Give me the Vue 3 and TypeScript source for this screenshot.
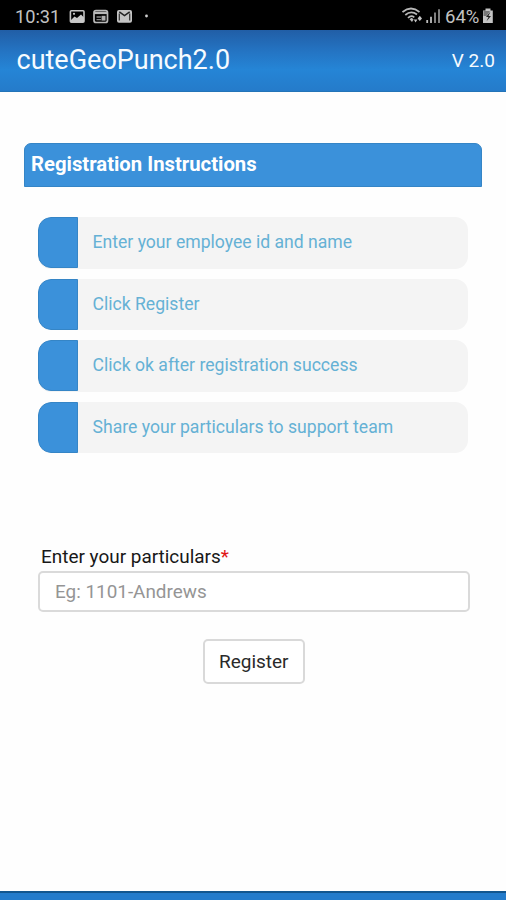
<script setup lang="ts">
import { ref } from 'vue'

const steps: string[] = [
  'Enter your employee id and name',
  'Click Register',
  'Click ok after registration success',
  'Share your particulars to support team',
]
const particulars = ref('')
</script>

<template>
  <div class="screen">
    <div class="status">
      <span class="clock">10:31</span>
      <svg class="notices" width="82" height="30" viewBox="0 0 82 30">
        <rect x="1.4" y="10.7" width="13.6" height="11.6" rx="1" fill="none" stroke="#c4c4c4" stroke-width="1.6" />
        <path d="M2 20 L5.5 16.5 L8 18 L12 14.5 L15 17.5 V22 H2Z" fill="#c8c8c8" />
        <circle cx="5" cy="13.8" r="1.1" fill="#c8c8c8" />
        <rect x="25" y="10.7" width="13.5" height="11.8" rx="2" fill="none" stroke="#b8b8b8" stroke-width="1.7" />
        <path d="M25 13 H38.5" stroke="#b8b8b8" stroke-width="2.2" />
        <path d="M27.5 17 H32 M27.5 19.7 H32" stroke="#888" stroke-width="1.3" />
        <rect x="32.5" y="15.8" width="4" height="4.8" fill="#b0b0b0" />
        <rect x="48" y="9.9" width="15" height="12.8" rx="2" fill="#c4c4c4" />
        <path d="M50.3 20.5 V13.5 M60.7 20.5 V13.5" stroke="#303030" stroke-width="1.2" />
        <path d="M50.3 11.8 L55.5 15.6 L60.7 11.8" fill="none" stroke="#222" stroke-width="1.5" />
        <circle cx="77.5" cy="16" r="1.4" fill="#d0d0d0" />
      </svg>
      <svg class="signal" width="41" height="30" viewBox="0 0 41 30">
        <g fill="none" stroke="#b8b8b8" stroke-width="1.7">
          <path d="M0.5 12 Q9 5 17.5 12" />
          <path d="M3.3 15 Q9 9.8 15 14.5" />
          <path d="M6 18 Q9 14.6 12.3 17.3" />
        </g>
        <path d="M7.5 19.3 L9.7 17.8 L11.6 19.5 L10 22Z" fill="#b8b8b8" />
        <path d="M11.8 19.6 L13.6 22.6 L15.4 19.6Z M15.6 18.6 L17.8 15.8 L20 18.6 L17.8 21Z" fill="#c4c4c4" />
        <path d="M25.2 20 V23 M29 16.8 V23" stroke="#bcbcbc" stroke-width="1.8" />
        <path d="M33 12.5 V23 M37 9.3 V23" stroke="#8d8d8d" stroke-width="1.8" />
      </svg>
      <span class="percent">64%</span>
      <svg class="battery" width="12" height="30" viewBox="0 0 12 30">
        <path d="M3.5 8.5 H8.5 V10.5 H10.8 V23 H1 V10.5 H3.5Z" fill="#c4c4c4" />
        <path d="M1.5 11 H8 L4.5 16 H1.5Z" fill="#777" />
        <path d="M8.5 11.5 L4 17 H6.5 L4.5 21.2 L9 16 H6.5Z" fill="#202020" />
      </svg>
    </div>

    <header class="bar">
      <h1>cuteGeoPunch2.0</h1>
      <span class="version">V 2.0</span>
    </header>

    <main>
      <h2>Registration Instructions</h2>
      <ul>
        <li v-for="step in steps" :key="step">
          <i></i>
          <span>{{ step }}</span>
        </li>
      </ul>
      <form @submit.prevent>
        <label for="particulars">Enter your particulars<b>*</b></label>
        <input id="particulars" v-model="particulars" type="text" placeholder="Eg: 1101-Andrews" />
        <button type="submit">Register</button>
      </form>
    </main>
    <footer></footer>
  </div>
</template>

<style>
body {
  margin: 0;
  background: #fefefe;
}
</style>

<style scoped>
* {
  box-sizing: border-box;
}
.screen {
  display: flex;
  flex-direction: column;
  height: 900px;
  overflow: hidden;
  background: #fefefe;
  font-family: Roboto, sans-serif;
}
.status {
  display: flex;
  flex: none;
  height: 30px;
  padding: 0 12px 0 15px;
  background: #000;
  color: #c2c2c2;
}
.clock {
  width: 54px;
  font-size: 18.2px;
  line-height: 34px;
}
.signal {
  margin-left: auto;
}
.percent {
  width: 39px;
  padding-left: 2px;
  font-size: 18.5px;
  line-height: 34px;
}
.bar {
  display: flex;
  flex: none;
  justify-content: space-between;
  height: 62px;
  padding: 0 11px 0 16.5px;
  border-bottom: 1px solid #2374b8;
  background: linear-gradient(#215ea6, #2474c3 35%, #2585d6 65%, #257bca);
  color: #f6fbff;
}
h1 {
  margin: 0;
  font-size: 27px;
  font-weight: 400;
  line-height: 61px;
}
.version {
  font-size: 19px;
  line-height: 61px;
}
main {
  flex: 1;
  padding: 51px 24px 0;
}
h2 {
  height: 44px;
  margin: 0;
  padding-left: 6px;
  border: 1px solid #3585c6;
  border-radius: 7px 7px 0 0;
  background: #3b91da;
  color: #fff;
  font-size: 20.3px;
  font-weight: 700;
  line-height: 40px;
}
ul {
  display: grid;
  gap: 10px;
  margin: 30px 14px 0;
  padding: 0;
  list-style: none;
}
li {
  display: flex;
  height: 51.5px;
  overflow: hidden;
  border-radius: 13px;
  background: #f4f4f4;
  color: #65b1d5;
  font-size: 17.6px;
  line-height: 50.5px;
}
li i {
  width: 40px;
  height: 51px;
  margin-right: 14.5px;
  border: 1px solid #3585c6;
  border-radius: 13px 0 0 13px;
  background: #3b91da;
}
form {
  display: flex;
  flex-direction: column;
  margin: 91px 12.5px 0 14px;
}
label {
  height: 27px;
  padding-left: 3px;
  color: #181818;
  font-size: 18.95px;
  line-height: 26px;
}
label b {
  color: #e01616;
  font-weight: 400;
}
input {
  height: 41px;
  padding: 0 15px;
  border: 2px solid #dadada;
  border-radius: 5px;
  background: #fff;
  color: #222;
  font: 18.9px Roboto, sans-serif;
}
input::placeholder {
  color: #959595;
}
button {
  align-self: center;
  width: 102px;
  height: 45px;
  margin-top: 27px;
  padding: 0;
  border: 2px solid #d9d9d9;
  border-radius: 5px;
  background: #fff;
  color: #2a2a2a;
  font: 19px Roboto, sans-serif;
}
footer {
  flex: none;
  height: 9px;
  border-top: 2px solid #12568f;
  background: #237bcb;
}
</style>
